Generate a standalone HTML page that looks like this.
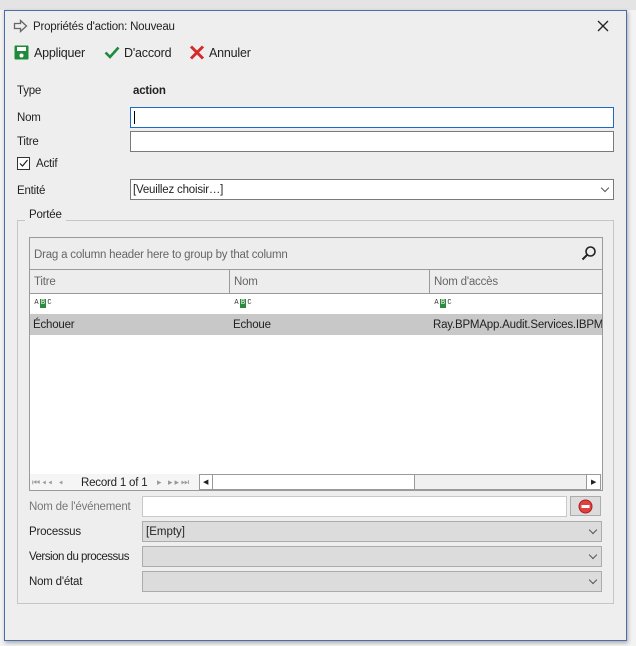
<!DOCTYPE html>
<html><head><meta charset="utf-8"><style>
*{box-sizing:border-box;margin:0;padding:0}
body{width:636px;height:646px;background:#f3f3f3;font-family:"Liberation Sans",sans-serif;font-size:11.5px;color:#222;position:relative;overflow:hidden}
.a{position:absolute}
.dlg{left:4px;top:10px;width:623px;height:631px;background:#eeeeee;border:1px solid #4a6ea9;box-shadow:1px 2px 4px rgba(0,0,0,.3)}
.inp{position:absolute;background:#fff;border:1px solid #7a7a7a;height:21px;line-height:14px}
.lbl{position:absolute;font-size:11.5px;white-space:nowrap;letter-spacing:-0.2px;line-height:16px}
.sel{position:absolute;background:#dcdcdc;border:1px solid #acacac;height:21px;font-size:11.5px;padding:3px 3px;line-height:14px}
.chev{position:absolute;right:5px;top:5px;width:6px;height:6px;border-right:1px solid #555;border-bottom:1px solid #555;transform:rotate(45deg)}
.abc{position:absolute;display:flex;height:9px;font-size:7px;line-height:9px;font-family:"Liberation Mono",monospace;color:#333}
.abc span{display:block;width:5px;text-align:center}
.abc .g{background:#2e8b3e;color:#fff;width:6px;margin:0 1px}
.hd{position:absolute;top:270px;height:23px;border-right:1px solid #9a9a9a;color:#666;padding:5px 4px;background:#ededed;letter-spacing:-0.2px;line-height:14px}
.nav{position:absolute;font-size:9px;color:#999;line-height:16px;letter-spacing:2px}
</style></head><body>
<div class="a" style="left:0;top:0;width:636px;height:10px;background:#e4e4e4"></div>
<div class="a dlg"></div>
<svg class="a" style="left:13px;top:19px" width="16" height="14"><path d="M1.5 4.5h6v-3l6 5.5-6 5.5v-3h-6z" fill="none" stroke="#666" stroke-width="1.3"/></svg>
<div class="lbl" style="left:33px;top:19px">Propriétés d'action: Nouveau</div>
<svg class="a" style="left:597px;top:20px" width="12" height="12"><path d="M1 1L11 11M11 1L1 11" stroke="#222" stroke-width="1.3"/></svg>
<svg class="a" style="left:14px;top:45px" width="15" height="15"><rect x="0.5" y="0.5" width="14" height="14" rx="1" fill="#1e8a3a"/><rect x="3" y="2" width="9" height="4" fill="#fff"/><circle cx="7.5" cy="10.5" r="2" fill="#fff"/></svg>
<div class="lbl" style="left:34px;top:45px;font-size:12.5px">Appliquer</div>
<svg class="a" style="left:104px;top:46px" width="16" height="13"><path d="M1.5 6.5l4.5 4.5 8.5-9.5" fill="none" stroke="#1e8a3a" stroke-width="2.6"/></svg>
<div class="lbl" style="left:124px;top:45px;font-size:12.5px">D'accord</div>
<svg class="a" style="left:189px;top:45px" width="16" height="15"><path d="M2 1.5l12 12M14 1.5l-12 12" stroke="#d42a2a" stroke-width="3"/></svg>
<div class="lbl" style="left:209px;top:45px;font-size:12.5px">Annuler</div>
<div class="lbl" style="left:17px;top:83px">Type</div>
<div class="lbl" style="left:133px;top:83px;font-weight:bold">action</div>
<div class="lbl" style="left:17px;top:110px">Nom</div>
<div class="inp" style="left:130px;top:107px;width:484px;border-color:#1b6ac9"><div class="a" style="left:3px;top:3px;width:1px;height:13px;background:#000"></div></div>
<div class="lbl" style="left:17px;top:134px">Titre</div>
<div class="inp" style="left:130px;top:131px;width:484px"></div>
<div class="a" style="left:17px;top:157px;width:13px;height:13px;border:1px solid #333;background:#fff"></div>
<svg class="a" style="left:18px;top:158px" width="11" height="11"><path d="M2 5.5l2.5 2.5 5-6" fill="none" stroke="#222" stroke-width="1.2"/></svg>
<div class="lbl" style="left:36px;top:156px">Actif</div>
<div class="lbl" style="left:17px;top:183px">Entité</div>
<div class="inp" style="left:130px;top:179px;width:484px;padding:3px 2px;letter-spacing:-0.2px">[Veuillez choisir…]<div class="chev"></div></div>
<div class="a" style="left:17px;top:220px;width:597px;height:384px;border:1px solid #c6c6c6"></div>
<div class="lbl" style="left:25px;top:207px;background:#eeeeee;padding:0 4px">Portée</div>
<div class="a" style="left:29px;top:237px;width:574px;height:254px;border:1px solid #9a9a9a;background:#fff"></div>
<div class="a" style="left:30px;top:238px;width:572px;height:32px;background:#ededed;border-bottom:1px solid #9a9a9a"></div>
<div class="lbl" style="left:34px;top:247px;color:#666">Drag a column header here to group by that column</div>
<svg class="a" style="left:581px;top:245px" width="16" height="16"><circle cx="9.5" cy="6.5" r="4.5" fill="none" stroke="#222" stroke-width="1.6"/><path d="M6.3 9.7L1.5 14.5" stroke="#222" stroke-width="2"/></svg>
<div class="hd" style="left:30px;width:200px">Titre</div>
<div class="hd" style="left:230px;width:200px">Nom</div>
<div class="hd" style="left:430px;width:172px;border-right:none">Nom d'accès</div>
<div class="a" style="left:30px;top:293px;width:572px;height:1px;background:#9a9a9a"></div>
<div class="abc" style="left:34px;top:299px"><span>A</span><span class="g">B</span><span>C</span></div>
<div class="abc" style="left:234px;top:299px"><span>A</span><span class="g">B</span><span>C</span></div>
<div class="abc" style="left:434px;top:299px"><span>A</span><span class="g">B</span><span>C</span></div>
<div class="a" style="left:30px;top:314px;width:572px;height:21px;background:#c8c8c8"></div>
<div class="lbl" style="left:33px;top:317px">Échouer</div>
<div class="lbl" style="left:233px;top:317px">Echoue</div>
<div class="lbl" style="left:433px;top:317px;width:169px;overflow:hidden">Ray.BPMApp.Audit.Services.IBPMAudit</div>
<div class="a" style="left:30px;top:474px;width:572px;height:16px;background:#f5f5f5"></div>
<div class="nav" style="left:32px;top:474px">⏮◂◂ ◂</div>
<div class="lbl" style="left:81px;top:475px">Record 1 of 1</div>
<div class="nav" style="left:157px;top:474px">▸ ▸▸⏭</div>
<div class="a" style="left:199px;top:474px;width:402px;height:16px;border:1px solid #9a9a9a;background:#f0f0f0"></div>
<div class="a" style="left:199px;top:474px;width:216px;height:16px;border:1px solid #9a9a9a;background:#fff"></div>
<div class="a" style="left:199px;top:474px;width:14px;height:16px;border:1px solid #9a9a9a;background:#fff;font-size:7px;padding:3px 3px">◀</div>
<div class="a" style="left:586px;top:474px;width:15px;height:16px;border:1px solid #9a9a9a;background:#fff;font-size:7px;padding:3px 4px">▶</div>
<div class="lbl" style="left:29px;top:499px;color:#777">Nom de l'événement</div>
<div class="inp" style="left:142px;top:496px;width:425px;border-color:#c8c8c8"></div>
<div class="a" style="left:570px;top:496px;width:31px;height:20px;background:#dcdcdc;border:1px solid #acacac"></div>
<svg class="a" style="left:578px;top:499px" width="15" height="15"><circle cx="7.5" cy="7.5" r="6.5" fill="#e04040" stroke="#b02020"/><rect x="3.5" y="6" width="8" height="3" fill="#fff"/></svg>
<div class="lbl" style="left:29px;top:524px">Processus</div>
<div class="sel" style="left:142px;top:521px;width:460px">[Empty]<div class="chev"></div></div>
<div class="lbl" style="left:29px;top:549px;letter-spacing:-0.5px">Version du processus</div>
<div class="sel" style="left:142px;top:546px;width:460px"><div class="chev"></div></div>
<div class="lbl" style="left:29px;top:574px">Nom d'état</div>
<div class="sel" style="left:142px;top:571px;width:460px"><div class="chev"></div></div>
</body></html>
